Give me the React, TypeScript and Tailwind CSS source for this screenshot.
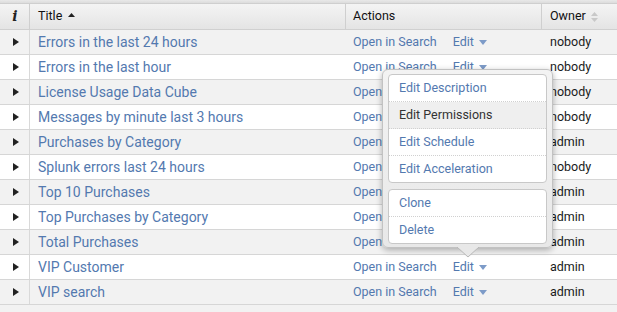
import React from "react";

const rows = [
  { title: "Errors in the last 24 hours", owner: "nobody" },
  { title: "Errors in the last hour", owner: "nobody" },
  { title: "License Usage Data Cube", owner: "nobody" },
  { title: "Messages by minute last 3 hours", owner: "nobody" },
  { title: "Purchases by Category", owner: "admin" },
  { title: "Splunk errors last 24 hours", owner: "nobody" },
  { title: "Top 10 Purchases", owner: "admin" },
  { title: "Top Purchases by Category", owner: "admin" },
  { title: "Total Purchases", owner: "admin" },
  { title: "VIP Customer", owner: "admin" },
  { title: "VIP search", owner: "admin" },
];

function Caret() {
  return (
    <svg width="8" height="5" viewBox="0 0 8 5" className="ml-[5px] mt-[1px]">
      <path d="M0 0 L8 0 L4 5 Z" fill="#7d9bc8" />
    </svg>
  );
}

export default function App() {
  return (
    <div
      className="relative w-[617px] h-[312px] overflow-hidden bg-[#f2f2f2] text-[#333]"
      style={{ fontFamily: "Roboto, 'Liberation Sans', sans-serif" }}
    >
      {/* top strip */}
      <div className="h-[4px] bg-gradient-to-b from-[#e9e9e9] to-[#dcdcdc] border-b border-[#cfcfcf]" />
      {/* header */}
      <div className="flex h-[26px] bg-gradient-to-b from-[#f4f4f4] to-[#e4e4e4] border-b border-[#d0d0d0] text-[12.5px] text-[#111]">
        <div className="w-[30px] border-r border-[#cfcfcf] flex items-center justify-center">
          <span
            className="italic font-bold text-[14px] text-[#222] ml-[1px]"
            style={{ fontFamily: "'DejaVu Serif', serif" }}
          >
            i
          </span>
        </div>
        <div className="w-[316px] border-r border-[#cfcfcf] flex items-center pl-[8px]">
          <span>Title</span>
          <svg width="7" height="4" viewBox="0 0 7 4" className="ml-[6px] mb-[4px]">
            <path d="M0 4 L7 4 L3.5 0 Z" fill="#222" />
          </svg>
        </div>
        <div className="w-[196px] border-r border-[#cfcfcf] flex items-center pl-[7px]">Actions</div>
        <div className="flex-1 flex items-center pl-[8px]">
          <span>Owner</span>
          <svg width="7" height="10" viewBox="0 0 7 10" className="ml-[5px]">
            <path d="M0 4 L7 4 L3.5 0 Z" fill="#c8c8c8" />
            <path d="M0 6 L7 6 L3.5 10 Z" fill="#c8c8c8" />
          </svg>
        </div>
      </div>
      {/* rows */}
      {rows.map((r, i) => (
        <div
          key={r.title}
          className={`flex h-[25px] border-b border-[#d6d6d6] ${i % 2 === 0 ? "bg-[#f2f2f2]" : "bg-white"}`}
        >
          <div className="w-[30px] border-r border-[#d9d9d9] flex items-center justify-center">
            <svg width="6" height="8" viewBox="0 0 6 8" className="ml-[2px]">
              <path d="M0 0 L6 4 L0 8 Z" fill="#222" />
            </svg>
          </div>
          <div className="w-[316px] flex items-center pl-[8px] text-[14px] text-[#5379af]">{r.title}</div>
          <div className="w-[196px] flex items-center pl-[7px] text-[12.5px] text-[#5379af]">
            <span>Open in Search</span>
            <span className="ml-[16px]">Edit</span>
            <Caret />
          </div>
          <div className="flex-1 flex items-center pl-[8px] text-[12.5px] text-[#1a1a1a]">{r.owner}</div>
        </div>
      ))}

      {/* popover */}
      <div className="absolute left-[382px] top-[69px] w-[171px] h-[179px] rounded-[6px] border border-[#c2c2c2] bg-gradient-to-b from-[#f3f3f3] to-[#e8e8e8] shadow-[0_2px_6px_rgba(0,0,0,0.3)] px-[5px] pt-[4px] flex flex-col gap-[6px]">
        <div className="bg-white border border-[#c8c8c8] rounded-[4px] flex flex-col text-[12.5px] text-[#5379af] overflow-hidden">
          <div className="h-[27px] flex items-center pl-[10px] border-b border-dotted border-[#d0d0d0]">Edit Description</div>
          <div className="h-[27px] flex items-center pl-[10px] border-b border-dotted border-[#d0d0d0] bg-[#efefef] text-[#333]">Edit Permissions</div>
          <div className="h-[27px] flex items-center pl-[10px] border-b border-dotted border-[#d0d0d0]">Edit Schedule</div>
          <div className="h-[26px] flex items-center pl-[10px]">Edit Acceleration</div>
        </div>
        <div className="bg-white border border-[#c8c8c8] rounded-[4px] flex flex-col text-[12.5px] text-[#5379af]">
          <div className="h-[27px] flex items-center pl-[10px] border-b border-dotted border-[#d0d0d0]">Clone</div>
          <div className="h-[26px] flex items-center pl-[10px]">Delete</div>
        </div>
        <svg width="22" height="11" viewBox="0 0 22 11" className="absolute left-[74px] bottom-[-11px]">
          <path d="M0 0 L11 10 L22 0" fill="#e8e8e8" stroke="#b8b8b8" />
          <path d="M1 -1 L21 -1 L21 0.2 L1 0.2 Z" fill="#e8e8e8" />
        </svg>
      </div>
    </div>
  );
}
